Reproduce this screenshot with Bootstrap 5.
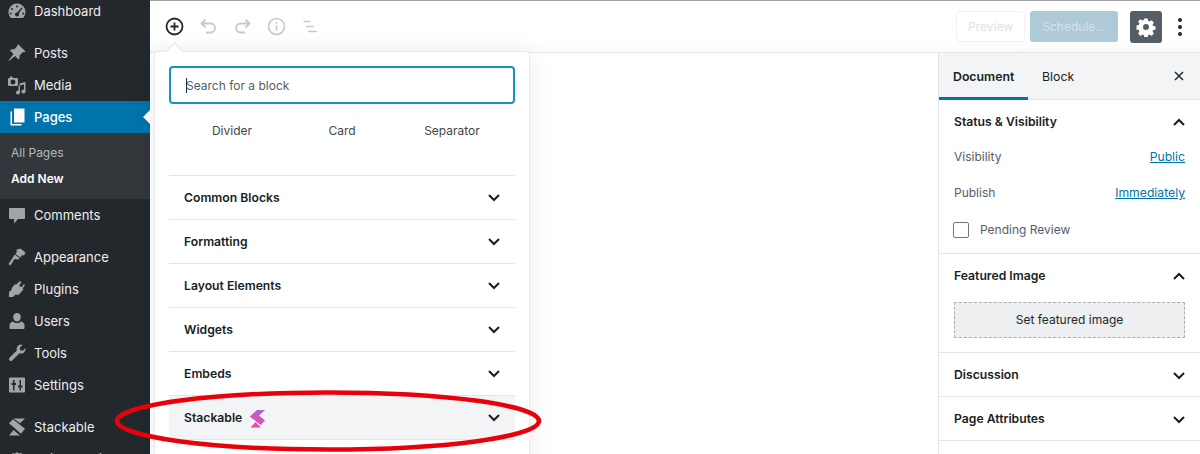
<!DOCTYPE html>
<html lang="en">
<head>
  <meta charset="UTF-8" />
  <title>Add New Page</title>
  <meta name="viewport" content="width=device-width, initial-scale=1.0"/>
  <link rel="stylesheet" href="https://cdn.jsdelivr.net/npm/bootstrap@5.3.0/dist/css/bootstrap.min.css" />
  <style>
    html, body { height: 454px; overflow: hidden; }
    body {
      font-family: Inter, "Liberation Sans", sans-serif;
      font-size: 12px;
      color: #191e23;
      background: #fff;
    }
    .wp-frame { height: 454px; }

    /* admin menu */
    .wp-menu { width: 150px; background: #23282d; color: #eee; overflow: hidden; }
    .wp-menu-list { margin-top: -5px; }
    .wp-item { height: 32px; padding: 2px 0 0 7px; gap: 7px; color: #eee; font-size: 13px; position: relative; }
    .wp-item svg { width: 20px; height: 20px; fill: #a0a5aa; flex: none; margin-top: -2px; }
    .wp-gap { margin-top: 10px; }
    .wp-item.is-current { background: #0073aa; color: #fff; font-weight: 500; }
    .wp-item.is-current svg { fill: #fff; }
    .wp-item.is-current::after {
      content: ""; position: absolute; right: 0; top: 9px;
      border: 7px solid transparent; border-right-color: #fff; border-left: 0;
    }
    .wp-sub { height: 66px; background: #32373c; padding: 7px 0 0 11px; font-size: 12px; }
    .wp-sub div { height: 26px; line-height: 26px; color: #b4b9be; }
    .wp-sub .wp-sub-on { color: #fff; font-weight: 600; }

    /* top toolbar */
    .wp-main { min-width: 0; position: relative; }
    .wp-top {
      height: 53px; border-top: 1px solid #a5a5a5; border-bottom: 1px solid #e2e4e7;
      padding: 0 18px 0 14px; background: linear-gradient(#fff 70%, #fbfbfb);
    }
    .wp-top svg { display: block; }
    .wp-tools { gap: 13px; }
    .wp-tools svg { width: 21px; height: 21px; }
    .wp-btn-preview {
      width: 69px; height: 31px; padding: 0; margin-right: 5px;
      font-size: 12px; color: #dfe1e3; background: #fff; border: 1px solid #f1f2f3; border-radius: 3px;
    }
    .wp-btn-sched {
      width: 88px; height: 31px; padding: 0; margin-right: 12px;
      font-size: 12px; color: #d3e3eb; background: #aecad9; border: 0; border-radius: 3px;
    }
    .wp-btn-gear {
      width: 32px; height: 32px; padding: 0; margin-right: 16px;
      background: #555d66; border: 0; border-radius: 3px;
    }

    /* inserter popover */
    .wp-popover {
      position: absolute; left: 4px; top: 51px; width: 376px; height: 420px;
      background: #fff; border: 1px solid #e8eaeb; box-shadow: 0 3px 24px rgba(25,30,35,.08);
      padding: 14px 14px 0; z-index: 5;
    }
    .wp-popover::before {
      content: ""; position: absolute; left: 13px; top: -7px; width: 13px; height: 13px;
      background: #fff; border-left: 1px solid #e2e4e7; border-top: 1px solid #e2e4e7; transform: rotate(45deg);
    }
    .wp-search {
      height: 38px; font-size: 12px; color: #555d66; border: 2px solid #1493bf; border-radius: 4px;
      padding: 0 0 0 15px; line-height: 36px;
    }
    .wp-caret { display: inline-block; width: 1px; height: 15px; background: #23282d; vertical-align: -3px; margin-right: -1px; }
    .wp-suggest { height: 71px; padding-top: 18px; font-size: 12px; color: #40464d; }
    .wp-suggest div { width: 110px; text-align: center; }
    .wp-panel .list-group-item {
      height: 44px; padding: 0 14px 0 15px; border-color: #e2e4e7; border-width: 1px 0 0;
      font-size: 12.200px; font-weight: 600; color: #191e23; background: transparent;
    }
    .wp-panel .list-group-item > span { margin-top: 2px; }
    .wp-panel .list-group-item.is-hover { background: #f3f4f5; border-bottom-width: 1px; height: 45px; }
    .wp-chev { width: 14px; height: 9px; fill: none; stroke: #191e23; stroke-width: 2; }
    .wp-logo { width: 17px; height: 19px; margin-left: 7px; }

    /* document sidebar */
    .wp-side { width: 262px; border-left: 1px solid #e2e4e7; }
    .wp-side-head { height: 47px; background: #f3f4f5; border-bottom: 1px solid #e2e4e7; }
    .wp-tab { height: 47px; line-height: 47px; font-size: 12.300px; color: #191e23; padding: 0 14px; }
    .wp-tab.is-on { width: 89px; font-weight: 600; border-bottom: 3px solid #0073aa; }
    .wp-tab-b { padding-left: 14px; }
    .wp-close { margin-right: 14px; width: 14px; height: 14px; stroke: #23282d; stroke-width: 1.500; fill: none; }
    .wp-section { border-bottom: 1px solid #e2e4e7; padding: 0 15px; }
    .wp-sec-status { height: 154px; }
    .wp-sec-image { height: 99px; }
    .wp-sec-fold { height: 44px; }
    .wp-sec-title { height: 44px; font-weight: 600; font-size: 12.200px; color: #191e23; }
    .wp-sec-title .wp-chev { margin-right: -1px; }
    .wp-sec-status .wp-sec-title { margin-bottom: -5px; }
    .wp-row { height: 36px; color: #555d66; font-size: 12px; }
    .wp-row-check { margin-top: 1px; }
    .wp-row a { color: #0073aa; font-size: 12.200px; }
    .wp-check { width: 16px; height: 16px; border: 1.500px solid #6c7781; border-radius: 2px; margin: 0 11px 0 -1px; flex: none; }
    .wp-feat {
      display: block; height: 36px; padding: 0; margin-top: 4px; font-size: 12px; color: #23282d; background: #edeff0;
      border: 1px dashed #a9adb1; border-radius: 0;
    }
    .wp-oval { position: absolute; left: 114px; top: 389px; z-index: 9; pointer-events: none; }
  </style>
</head>
<body>
  <div class="wp-frame d-flex">

    <nav class="wp-menu flex-shrink-0">
      <div class="wp-menu-list">
        <div class="wp-item d-flex align-items-center">
          <svg viewBox="0 0 20 20"><path d="M10 2.500a8.500 8.500 0 0 0-8.500 8.500c0 2.300.9 4.400 2.400 5.900h12.200A8.400 8.400 0 0 0 18.500 11 8.500 8.500 0 0 0 10 2.500zm0 2a1 1 0 1 1 0 2 1 1 0 0 1 0-2zm-5 2.500a1 1 0 1 1 0 2 1 1 0 0 1 0-2zm9.600-.600 1 .6-3.900 5.400a2 2 0 1 1-1.600-1zM3.800 11.500a1 1 0 1 1 0 2 1 1 0 0 1 0-2zm12.400 0a1 1 0 1 1 0 2 1 1 0 0 1 0-2z" fill-rule="evenodd"/></svg>
          <span>Dashboard</span>
        </div>
        <div class="wp-item wp-gap d-flex align-items-center">
          <svg viewBox="0 0 20 20"><path d="M11.500 1.500l7 7-1.500 1-1-.5-3.500 3.500c.4 1.600 0 3-1 4l-3.500-3.500L2 18l-.5-.5 5-6.500L3 7.500c1-1 2.400-1.400 4-1l3.500-3.500-.5-1z"/></svg>
          <span>Posts</span>
        </div>
        <div class="wp-item d-flex align-items-center">
          <svg viewBox="0 0 20 20"><path fill-rule="evenodd" d="M3 1.500h2l1 1.500h4a1 1 0 0 1 1 1v6a1 1 0 0 1-1 1H2a1 1 0 0 1-1-1V4a1 1 0 0 1 1-1h1zM6 4.500a2.500 2.500 0 1 0 0 5 2.500 2.500 0 0 0 0-5zM18.500 7v9.500a2 2 0 1 1-1.500-1.900V9.500l-4 1V17.500a2 2 0 1 1-1.500-1.900V11h1V8.500z"/></svg>
          <span>Media</span>
        </div>
        <div class="wp-item is-current d-flex align-items-center">
          <svg viewBox="0 0 20 20"><path d="M7 1.500h10.500v14H7zM5 4.500v12.500h9.500v1.500H3.500v-14z"/></svg>
          <span>Pages</span>
        </div>
        <div class="wp-sub">
          <div>All Pages</div>
          <div class="wp-sub-on">Add New</div>
        </div>
        <div class="wp-item d-flex align-items-center">
          <svg viewBox="0 0 20 20"><path d="M3 3h14a1 1 0 0 1 1 1v9a1 1 0 0 1-1 1h-6l-4 4.500V14H3a1 1 0 0 1-1-1V4a1 1 0 0 1 1-1z"/></svg>
          <span>Comments</span>
        </div>
        <div class="wp-item wp-gap d-flex align-items-center">
          <svg viewBox="0 0 20 20"><path d="M13.500 1.500l5 4-1.500 3-2-.5-1.500 2.500-5-3.500 1.500-2.500-1-1.500zM7.700 7.500l5 3.500-1.200 1.500-4-.5-4 6.500-2-1.500 4-6z"/></svg>
          <span>Appearance</span>
        </div>
        <div class="wp-item d-flex align-items-center">
          <svg viewBox="0 0 20 20"><path d="M13 2l1.500 1.200-2.500 3.300 2.500 1.800 2.500-3.300L18 6l-2.500 3.500 1 .8-4 4.700c-1.500 1-3 1-4 .5L6 18H2v-5l2.500-2c0-1 .3-2.500 1.500-3.500l2-2.500 1 .8z"/></svg>
          <span>Plugins</span>
        </div>
        <div class="wp-item d-flex align-items-center">
          <svg viewBox="0 0 20 20"><path d="M10 2a3.800 3.800 0 0 1 3.800 4c0 2.500-1.700 4.500-3.800 4.500S6.200 8.500 6.200 6A3.800 3.800 0 0 1 10 2zM6 10.500c1 1 2.500 1.500 4 1.500s3-.5 4-1.500c2 .5 3.500 2 3.500 3.500v3a1 1 0 0 1-1 1h-13a1 1 0 0 1-1-1v-3c0-1.500 1.500-3 3.500-3.500z"/></svg>
          <span>Users</span>
        </div>
        <div class="wp-item d-flex align-items-center">
          <svg viewBox="0 0 20 20"><path d="M14 1.500a4.500 4.500 0 0 0-4.200 6L2.500 14.800a2 2 0 0 0 0 2.700 2 2 0 0 0 2.700 0l7.300-7.300a4.500 4.500 0 0 0 6-5.200l-2.800 2.800-2.500-.5-.5-2.500L15.500 2c-.5-.3-1-.5-1.500-.5z"/></svg>
          <span>Tools</span>
        </div>
        <div class="wp-item d-flex align-items-center">
          <svg viewBox="0 0 20 20"><path fill-rule="evenodd" d="M3 2.500h14a1 1 0 0 1 1 1v13a1 1 0 0 1-1 1H3a1 1 0 0 1-1-1v-13a1 1 0 0 1 1-1zM6 5v3H4.500v2H6v5.500h1.500V10H9V8H7.500V5zm6.500 0v5.500H11v2h1.500v3H14v-3h1.500v-2H14V5z"/></svg>
          <span>Settings</span>
        </div>
        <div class="wp-item wp-gap d-flex align-items-center">
          <svg viewBox="0 0 20 20"><path d="M6.500 1.500H18l-5 4.800zM2 6.200l4-4 12 9.500-4 5zM2 18.500l4.500-5.500 6.500 5.500z"/></svg>
          <span>Stackable</span>
        </div>
        <div class="wp-item d-flex align-items-center">
          <svg viewBox="0 0 20 20"><path d="M10 3l2 1.500 2.500-.5 1 2.500 2.500 1-.5 2.500 1.500 2H1l1.500-2L2 7.500l2.500-1 1-2.500 2.500.5z"/></svg>
          <span>Snippets Library</span>
        </div>
      </div>
    </nav>

    <div class="wp-main flex-grow-1 d-flex flex-column">
      <header class="wp-top d-flex align-items-center justify-content-between">
        <div class="wp-tools d-flex align-items-center">
          <svg viewBox="0 0 21 21" fill="none" stroke="#23282d" stroke-width="1.800"><circle cx="10.500" cy="10.500" r="8"/><path d="M10.500 6.500v8M6.500 10.500h8"/></svg>
          <svg viewBox="0 0 21 21" fill="none" stroke="#c5c9cc" stroke-width="1.800"><path d="M7.500 3.500 3.500 7.500l4 4M3.500 7.500h9a4.500 4.500 0 0 1 0 9H8"/></svg>
          <svg viewBox="0 0 21 21" fill="none" stroke="#c5c9cc" stroke-width="1.800"><path d="M13.500 3.500l4 4-4 4M17.500 7.500h-9a4.500 4.500 0 0 0 0 9H13"/></svg>
          <svg viewBox="0 0 21 21" fill="none" stroke="#c5c9cc" stroke-width="1.600"><circle cx="10.500" cy="10.500" r="8"/><path d="M10.500 9.500v5M10.500 6.300v1.800"/></svg>
          <svg viewBox="0 0 21 21" fill="none" stroke="#c5c9cc" stroke-width="1.300"><path d="M3.500 5.500h7M6 10.500h8M8 15.500h9"/></svg>
        </div>
        <div class="d-flex align-items-center">
          <button type="button" class="btn wp-btn-preview">Preview</button>
          <button type="button" class="btn wp-btn-sched">Schedule...</button>
          <button type="button" class="btn wp-btn-gear d-flex align-items-center justify-content-center">
            <svg width="20" height="20" viewBox="0 0 20 20"><path fill="#fff" fill-rule="evenodd" d="M8.300 1.500h3.400l.4 2.300 1.500.7 2-1.300 2.300 2.300-1.300 2 .6 1.500 2.300.4v3.300l-2.300.4-.6 1.500 1.300 2-2.300 2.300-2-1.300-1.500.6-.4 2.300H8.300l-.4-2.300-1.500-.6-2 1.300-2.300-2.300 1.300-2-.6-1.500-2.300-.4V8.400l2.300-.4.600-1.500-1.300-2 2.300-2.300 2 1.300 1.500-.7zM10 7a3 3 0 1 0 0 6 3 3 0 0 0 0-6z"/></svg>
          </button>
          <svg width="4" height="18" viewBox="0 0 4 18" fill="#23282d"><circle cx="2" cy="2" r="2"/><circle cx="2" cy="9" r="2"/><circle cx="2" cy="16" r="2"/></svg>
        </div>
      </header>

      <div class="d-flex flex-grow-1">
        <div class="flex-grow-1"></div>
        <aside class="wp-side flex-shrink-0">
          <div class="wp-side-head d-flex align-items-start">
            <div class="wp-tab is-on">Document</div>
            <div class="wp-tab wp-tab-b">Block</div>
            <svg class="wp-close ms-auto align-self-center" viewBox="0 0 14 14"><path d="M3 3l8 8M11 3l-8 8"/></svg>
          </div>

          <section class="wp-section wp-sec-status">
            <div class="wp-sec-title d-flex align-items-center justify-content-between">
              <span>Status &amp; Visibility</span>
              <svg class="wp-chev" viewBox="0 0 14 9"><path d="M2 7l5-5 5 5"/></svg>
            </div>
            <div class="wp-row d-flex align-items-center justify-content-between"><span>Visibility</span><a href="#">Public</a></div>
            <div class="wp-row d-flex align-items-center justify-content-between"><span>Publish</span><a href="#">Immediately</a></div>
            <div class="wp-row wp-row-check d-flex align-items-center"><span class="wp-check"></span><span>Pending Review</span></div>
          </section>

          <section class="wp-section wp-sec-image">
            <div class="wp-sec-title d-flex align-items-center justify-content-between">
              <span>Featured Image</span>
              <svg class="wp-chev" viewBox="0 0 14 9"><path d="M2 7l5-5 5 5"/></svg>
            </div>
            <button type="button" class="btn wp-feat w-100">Set featured image</button>
          </section>

          <section class="wp-section wp-sec-fold">
            <div class="wp-sec-title d-flex align-items-center justify-content-between">
              <span>Discussion</span>
              <svg class="wp-chev" viewBox="0 0 14 9"><path d="M2 2l5 5 5-5"/></svg>
            </div>
          </section>

          <section class="wp-section wp-sec-fold">
            <div class="wp-sec-title d-flex align-items-center justify-content-between">
              <span>Page Attributes</span>
              <svg class="wp-chev" viewBox="0 0 14 9"><path d="M2 2l5 5 5-5"/></svg>
            </div>
          </section>
        </aside>
      </div>

      <div class="wp-popover">
        <div class="wp-search"><span class="wp-caret"></span>Search for a block</div>
        <div class="wp-suggest d-flex justify-content-center">
          <div>Divider</div><div>Card</div><div>Separator</div>
        </div>
        <div class="list-group list-group-flush wp-panel">
          <div class="list-group-item d-flex align-items-center justify-content-between"><span>Common Blocks</span><svg class="wp-chev" viewBox="0 0 14 9"><path d="M2 2l5 5 5-5"/></svg></div>
          <div class="list-group-item d-flex align-items-center justify-content-between"><span>Formatting</span><svg class="wp-chev" viewBox="0 0 14 9"><path d="M2 2l5 5 5-5"/></svg></div>
          <div class="list-group-item d-flex align-items-center justify-content-between"><span>Layout Elements</span><svg class="wp-chev" viewBox="0 0 14 9"><path d="M2 2l5 5 5-5"/></svg></div>
          <div class="list-group-item d-flex align-items-center justify-content-between"><span>Widgets</span><svg class="wp-chev" viewBox="0 0 14 9"><path d="M2 2l5 5 5-5"/></svg></div>
          <div class="list-group-item d-flex align-items-center justify-content-between"><span>Embeds</span><svg class="wp-chev" viewBox="0 0 14 9"><path d="M2 2l5 5 5-5"/></svg></div>
          <div class="list-group-item is-hover d-flex align-items-center justify-content-between">
            <span class="d-flex align-items-center">Stackable
              <svg class="wp-logo" viewBox="0 0 17 19"><path fill="#a763dc" d="M1 8 8 1h8L8 8.500 4.500 10z"/><path fill="#d556b8" d="M1 7.500 6 3l10 8.500L11.500 16z"/><path fill="#e54f9f" d="M1.500 18.500 6.500 13l5.500 5.500z"/></svg>
            </span>
            <svg class="wp-chev" viewBox="0 0 14 9"><path d="M2 2l5 5 5-5"/></svg>
          </div>
        </div>
      </div>
    </div>
  </div>

  <svg class="wp-oval" width="430" height="65" viewBox="0 0 430 65" fill="none"><ellipse cx="214" cy="32" rx="211" ry="28.500" stroke="#e8000b" stroke-width="4.500"/></svg>

  <script src="https://cdn.jsdelivr.net/npm/bootstrap@5.3.0/dist/js/bootstrap.bundle.min.js"></script>
</body>
</html>
